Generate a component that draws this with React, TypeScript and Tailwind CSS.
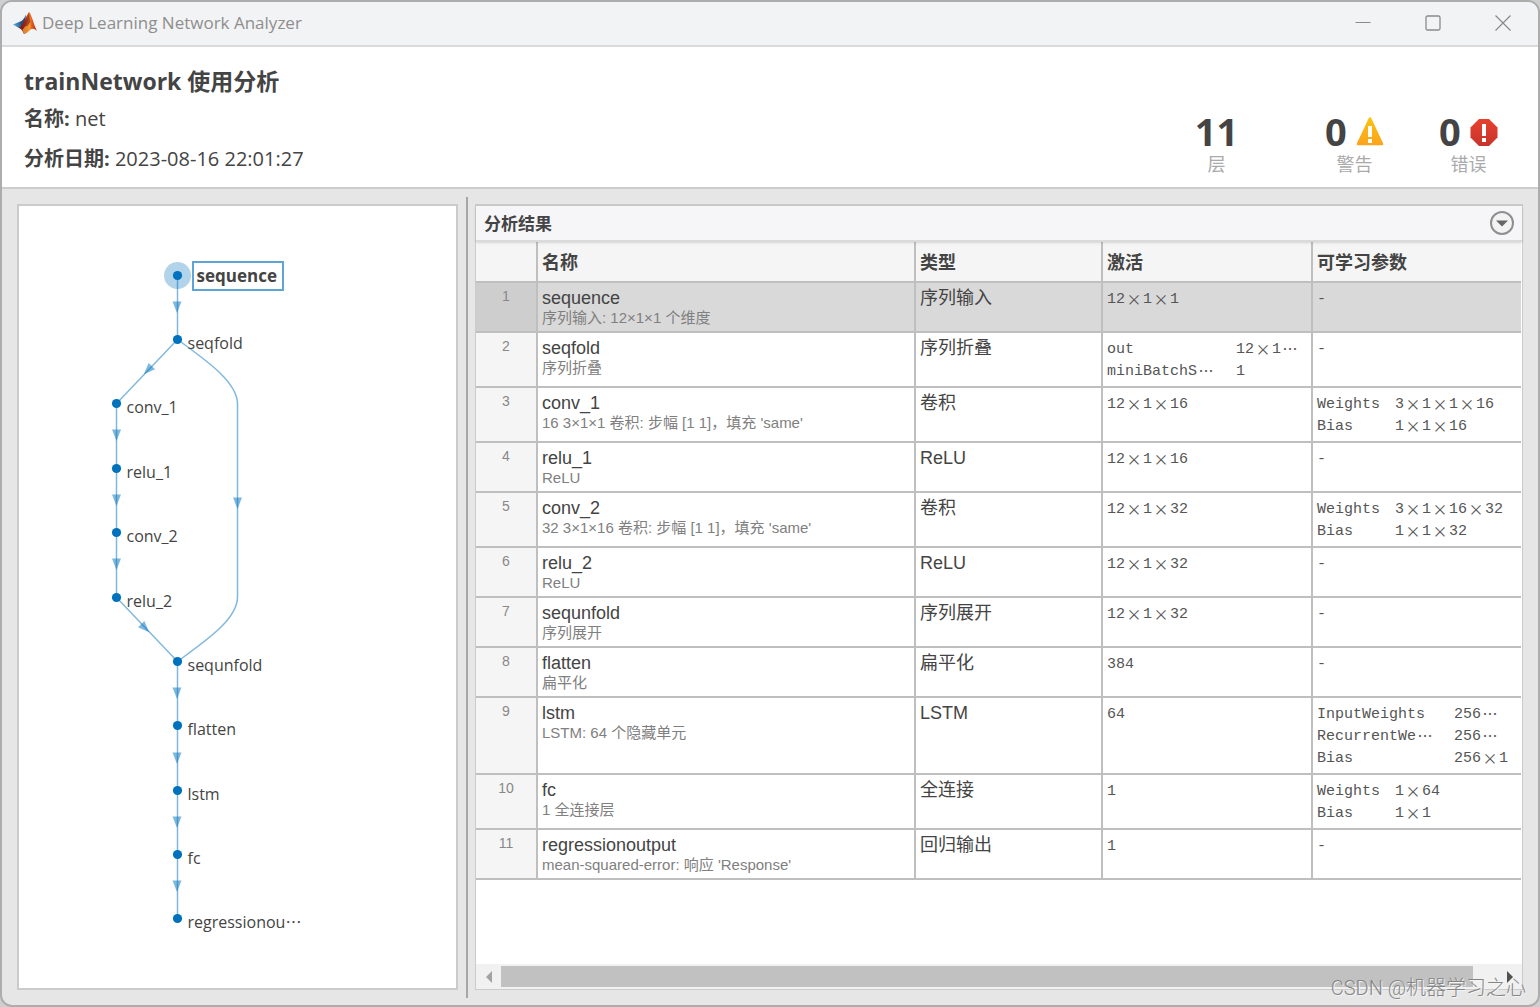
import { useState } from "react";
import clsx from "clsx";

type Param = { name: string; value: string };

type Layer = {
  name: string;
  detail: string;
  type: string;
  activations: string | Param[];
  activationWidth?: string;
  learnables?: Param[];
  learnableWidth?: string;
};

const layers: Layer[] = [
  {
    name: "sequence",
    detail: "序列输入: 12×1×1 个维度",
    type: "序列输入",
    activations: "12×1×1",
  },
  {
    name: "seqfold",
    detail: "序列折叠",
    type: "序列折叠",
    activations: [
      { name: "out", value: "12×1⋯" },
      { name: "miniBatchS⋯", value: "1" },
    ],
    activationWidth: "w-[129px]",
  },
  {
    name: "conv_1",
    detail: "16 3×1×1 卷积: 步幅 [1 1]，填充 'same'",
    type: "卷积",
    activations: "12×1×16",
    learnables: [
      { name: "Weights", value: "3×1×1×16" },
      { name: "Bias", value: "1×1×16" },
    ],
    learnableWidth: "w-[78px]",
  },
  { name: "relu_1", detail: "ReLU", type: "ReLU", activations: "12×1×16" },
  {
    name: "conv_2",
    detail: "32 3×1×16 卷积: 步幅 [1 1]，填充 'same'",
    type: "卷积",
    activations: "12×1×32",
    learnables: [
      { name: "Weights", value: "3×1×16×32" },
      { name: "Bias", value: "1×1×32" },
    ],
    learnableWidth: "w-[78px]",
  },
  { name: "relu_2", detail: "ReLU", type: "ReLU", activations: "12×1×32" },
  {
    name: "sequnfold",
    detail: "序列展开",
    type: "序列展开",
    activations: "12×1×32",
  },
  { name: "flatten", detail: "扁平化", type: "扁平化", activations: "384" },
  {
    name: "lstm",
    detail: "LSTM: 64 个隐藏单元",
    type: "LSTM",
    activations: "64",
    learnables: [
      { name: "InputWeights", value: "256⋯" },
      { name: "RecurrentWe⋯", value: "256⋯" },
      { name: "Bias", value: "256×1" },
    ],
    learnableWidth: "w-[137px]",
  },
  {
    name: "fc",
    detail: "1 全连接层",
    type: "全连接",
    activations: "1",
    learnables: [
      { name: "Weights", value: "1×64" },
      { name: "Bias", value: "1×1" },
    ],
    learnableWidth: "w-[78px]",
  },
  {
    name: "regressionoutput",
    detail: "mean-squared-error: 响应 'Response'",
    type: "回归输出",
    activations: "1",
  },
];

// node positions inside the network plot
const nodes = [
  { label: "sequence", x: 158.5, y: 69.5 },
  { label: "seqfold", x: 158.5, y: 133.5 },
  { label: "conv_1", x: 97.5, y: 197.5 },
  { label: "relu_1", x: 97.5, y: 262.5 },
  { label: "conv_2", x: 97.5, y: 326.5 },
  { label: "relu_2", x: 97.5, y: 391.5 },
  { label: "sequnfold", x: 158.5, y: 455.5 },
  { label: "flatten", x: 158.5, y: 519.5 },
  { label: "lstm", x: 158.5, y: 584.5 },
  { label: "fc", x: 158.5, y: 648.5 },
  { label: "regressionou⋯", x: 158.5, y: 712.5 },
];

const MatlabLogo = () => (
  <svg width="24" height="22" viewBox="0 0 24 22" className="shrink-0">
    <defs>
      <linearGradient id="peak" x1="0" y1="0" x2="1" y2="0">
        <stop offset="0" stopColor="#5c1414" />
        <stop offset="0.4" stopColor="#a52c1c" />
        <stop offset="0.62" stopColor="#ee7a28" />
        <stop offset="1" stopColor="#b3220f" />
      </linearGradient>
      <linearGradient id="wing" x1="0" y1="0" x2="1" y2="0">
        <stop offset="0" stopColor="#5bb0e4" />
        <stop offset="1" stopColor="#1c4a80" />
      </linearGradient>
    </defs>
    <path d="M0 12.5 L6 10 L10 13 L5.5 15.8 Z" fill="url(#wing)" />
    <path d="M6 10 C9 9.5 11 7 13 2.5 L12 10 L9 14 Z" fill="#24507f" />
    <path
      d="M16 0 C18 0.5 20.5 12 24 19 C21.5 16.5 19.5 16 17.5 17.5 C15 19.5 13.5 21.5 11 22 C10 20 8.5 16.5 5.5 15.8 C10 14 12.5 5 16 0 Z"
      fill="url(#peak)"
    />
    <path
      d="M9.5 17.5 C12 16 15 9 16.2 2 C17 8 17.5 13 17.5 17.5 C15 19.5 13.5 21.5 11 22 Z"
      fill="#f7a535"
      opacity="0.75"
    />
    <path d="M11 14.5 C13.5 10 15 5 16 1 L17.2 10 L14.5 14 Z" fill="#8f2416" opacity="0.7" />
  </svg>
);

const WarningIcon = () => (
  <svg width="28" height="30" viewBox="0 0 28 30">
    <defs>
      <linearGradient id="warn" x1="0" y1="0" x2="0" y2="1">
        <stop offset="0" stopColor="#fdc00f" />
        <stop offset="1" stopColor="#fba51c" />
      </linearGradient>
    </defs>
    <path
      d="M14 2.5 L26 28 H2 Z"
      fill="url(#warn)"
      stroke="url(#warn)"
      strokeWidth="2.6"
      strokeLinejoin="round"
    />
    <path d="M12 10h4v11h-4z M12 23h4v4h-4z" fill="#fff" />
  </svg>
);

const ErrorIcon = () => (
  <svg width="28" height="30" viewBox="0 0 28 30">
    <defs>
      <linearGradient id="err" x1="0" y1="0" x2="0" y2="1">
        <stop offset="0" stopColor="#e8402f" />
        <stop offset="1" stopColor="#c6352b" />
      </linearGradient>
    </defs>
    <path d="M9 3h10l8.5 8.5v10L19 30H9L0.5 21.5v-10z" fill="url(#err)" />
    <path d="M12 8h4v12h-4z M12 22h4v4h-4z" fill="#fff" />
  </svg>
);

const Arrow = ({ x, y, angle = 0 }: { x: number; y: number; angle?: number }) => (
  <path
    d="M-4.5 -5.5 H4.5 L0 6 Z"
    transform={`translate(${x} ${y}) rotate(${angle})`}
    fill="#0072bd"
    fillOpacity="0.5"
  />
);

const NetworkPlot = ({ selected }: { selected: number }) => (
  <svg
    width="437"
    height="760"
    viewBox="0 0 437 760"
    className="font-['Open_Sans','Noto_Sans_CJK_SC',sans-serif]"
  >
    <g fill="none" stroke="#0072bd" strokeOpacity="0.5" strokeWidth="1.5">
      <path d="M158.5 69.5 V133.5 L97.5 197.5 V391.5 L158.5 455.5 V712.5" />
      <path d="M158.5 133.5 C188 155 218.5 176 218.5 198 V391 C218.5 413 188 434 158.5 455.5" />
    </g>
    <Arrow x={158} y={101} />
    <Arrow x={129} y={164} angle={44} />
    <Arrow x={97.5} y={229} />
    <Arrow x={97.5} y={294} />
    <Arrow x={97.5} y={358} />
    <Arrow x={126} y={422} angle={-44} />
    <Arrow x={218.5} y={297} />
    <Arrow x={158} y={487} />
    <Arrow x={158} y={552} />
    <Arrow x={158} y={616} />
    <Arrow x={158} y={680} />
    {nodes.map((node, i) => (
      <g key={node.label}>
        {i === selected && (
          <>
            <circle cx={node.x} cy={node.y} r="13.5" fill="#0072bd" fillOpacity="0.3" />
            <rect
              x={node.x + 15.5}
              y={node.y - 13.5}
              width="90"
              height="28"
              fill="#fff"
              stroke="#5ea5d6"
              strokeWidth="2"
            />
          </>
        )}
        <circle cx={node.x} cy={node.y} r="4.6" fill="#0072bd" />
        <text
          x={i === selected ? node.x + 19 : node.x + 10}
          y={i === selected ? node.y + 6 : node.y + 9}
          fill="#444"
          fontSize={i === selected ? 17 : 16}
          fontWeight={i === selected ? 700 : 400}
        >
          {node.label}
        </text>
      </g>
    ))}
  </svg>
);

// the multiplication sign and the ellipsis take two character cells
const Mono = ({ text }: { text: string }) => (
  <span className="flex h-[22px] items-center">
    {text.split(/([×⋯])/).map((part, i) =>
      part === "×" || part === "⋯" ? (
        <span
          key={i}
          className="w-[18px] pb-1 text-center font-['Noto_Sans_CJK_SC',sans-serif] leading-none"
        >
          {part}
        </span>
      ) : (
        <span key={i}>{part}</span>
      )
    )}
  </span>
);

const ParamList = ({ items, width }: { items: Param[]; width?: string }) => (
  <dl>
    {items.map((item) => (
      <div key={item.name} className="flex">
        <dt className={clsx("shrink-0", width)}>
          <Mono text={item.name} />
        </dt>
        <dd>
          <Mono text={item.value} />
        </dd>
      </div>
    ))}
  </dl>
);

const cell = "border-b-2 border-[#bfbfbf] px-1 align-top";
const mono =
  "pt-1.5 pb-[3px] font-['Liberation_Mono','Noto_Sans_CJK_SC',monospace] text-[15px] leading-[22px] whitespace-nowrap text-[#555]";

const App = () => {
  const [selected, setSelected] = useState(0);

  return (
    <div className="bg-[#cfcfcf]">
      <div
        lang="zh-CN"
        className="relative flex min-h-screen flex-col overflow-hidden rounded-xl border-2 border-[#adadad] bg-[#e6e6e6] font-['Open_Sans','Noto_Sans_CJK_SC',sans-serif] text-[#444]"
      >
        <div className="flex h-[45px] items-center border-b-2 border-[#dadada] bg-[#f2f3f4] pb-0.5 pl-[11px]">
          <MatlabLogo />
          <span className="ml-[5px] flex-1 text-[17px] text-[#8e8e8e]">
            Deep Learning Network Analyzer
          </span>
          <button aria-label="Minimize" className="flex h-full w-[70px] items-center justify-center">
            <svg width="16" height="16" viewBox="0 0 16 16" stroke="#8a8a8a" fill="none">
              <path d="M0.5 7.5h15" />
            </svg>
          </button>
          <button aria-label="Maximize" className="flex h-full w-[70px] items-center justify-center">
            <svg width="16" height="16" viewBox="0 0 16 16" stroke="#8a8a8a" fill="none">
              <rect x="1" y="1" width="14" height="14" rx="1.5" strokeWidth="1.3" />
            </svg>
          </button>
          <button aria-label="Close" className="flex h-full w-[70px] items-center justify-center">
            <svg width="16" height="16" viewBox="0 0 16 16" stroke="#8a8a8a" fill="none">
              <path d="M0.5 0.5l15 15M15.5 0.5l-15 15" strokeWidth="1.2" />
            </svg>
          </button>
        </div>

        <header className="flex justify-between border-b-2 border-[#cdcdcd] bg-white pr-10 pl-[22px]">
          <div className="pt-4 pb-2">
            <h1 className="text-[23px] leading-9 font-bold">trainNetwork 使用分析</h1>
            <p className="text-xl leading-10">
              <b>名称:</b> net
            </p>
            <p className="text-xl leading-10">
              <b>分析日期:</b> 2023-08-16 22:01:27
            </p>
          </div>
          <div className="flex pt-[61px] text-center">
            <div className="w-[59px]">
              <div className="text-[38px] leading-[46px] font-bold">11</div>
              <div className="text-lg leading-5 text-[#aaa]">层</div>
            </div>
            <div className="ml-[79px] w-[59px]">
              <div className="flex items-center justify-between text-[38px] leading-[46px] font-bold">
                0 <WarningIcon />
              </div>
              <div className="text-lg leading-5 text-[#aaa]">警告</div>
            </div>
            <div className="ml-[55px] w-[59px]">
              <div className="flex items-center justify-between text-[38px] leading-[46px] font-bold">
                0 <ErrorIcon />
              </div>
              <div className="text-lg leading-5 text-[#aaa]">错误</div>
            </div>
          </div>
        </header>

        <main className="flex flex-1 px-[15px] pt-2 pb-[7px]">
          <section className="mt-[7px] mb-2 w-[441px] shrink-0 border-2 border-[#cbcbcb] bg-white">
            <NetworkPlot selected={selected} />
          </section>

          <div className="mr-[7px] ml-2 w-0.5 shrink-0 bg-[#a6a6a6]" />

          <section className="mt-[7px] mb-2 flex min-w-0 flex-1 flex-col border border-t-2 border-[#cbcbcb] bg-white">
            <div className="relative flex h-9 items-center justify-between border-b-2 border-[#dadada] bg-[#f6f6f9] px-2 shadow-sm">
              <h2 className="pt-0.5 text-[17px] font-bold">分析结果</h2>
              <button
                aria-label="选项"
                className="flex size-6 items-center justify-center rounded-full border-2 border-[#8f8f8f] bg-[#f3f3f3]"
              >
                <svg width="12" height="7" viewBox="0 0 12 7" fill="#666">
                  <path d="M0 0.5h12L6 6.5z" />
                </svg>
              </button>
            </div>

            <div className="flex-1 pr-px">
              <table className="w-full table-fixed border-separate border-spacing-0 text-left font-['Liberation_Sans','Noto_Sans_CJK_SC',sans-serif] text-lg leading-[22px]">
                <colgroup>
                  <col className="w-[62px]" />
                  <col />
                  <col className="w-[187px]" />
                  <col className="w-[210px]" />
                  <col className="w-[208px]" />
                </colgroup>
                <thead>
                  <tr className="h-[41px] bg-[#f5f5f5]">
                    <th className="border-r-2 border-b-2 border-[#bfbfbf]" />
                    <th className="border-r-2 border-b-2 border-[#bfbfbf] px-1 pt-0.5">名称</th>
                    <th className="border-r-2 border-b-2 border-[#bfbfbf] px-1 pt-0.5">类型</th>
                    <th className="border-r-2 border-b-2 border-[#bfbfbf] px-1 pt-0.5">激活</th>
                    <th className="border-b-2 border-[#bfbfbf] px-1 pt-0.5">可学习参数</th>
                  </tr>
                </thead>
                <tbody>
                  {layers.map((layer, i) => (
                    <tr
                      key={layer.name}
                      onClick={() => setSelected(i)}
                      className={i === selected ? "bg-[#d9d9d9]" : "bg-white"}
                    >
                      <td
                        className={clsx(
                          cell,
                          "border-r-2 py-1 text-center text-sm leading-[18px] text-[#888]",
                          i === selected ? "bg-[#cecece]" : "bg-[#f5f5f5]"
                        )}
                      >
                        {i + 1}
                      </td>
                      <td className={clsx(cell, "border-r-2 py-1")}>
                        <div>{layer.name}</div>
                        <div className="text-[15px] leading-[18px] text-[#808080]">
                          {layer.detail}
                        </div>
                      </td>
                      <td className={clsx(cell, "border-r-2 py-1")}>{layer.type}</td>
                      <td className={clsx(cell, mono, "border-r-2")}>
                        {typeof layer.activations === "string" ? (
                          <Mono text={layer.activations} />
                        ) : (
                          <ParamList items={layer.activations} width={layer.activationWidth} />
                        )}
                      </td>
                      <td className={clsx(cell, mono)}>
                        {layer.learnables ? (
                          <ParamList items={layer.learnables} width={layer.learnableWidth} />
                        ) : (
                          <Mono text="-" />
                        )}
                      </td>
                    </tr>
                  ))}
                </tbody>
              </table>
            </div>

            <div className="flex h-[25px] items-center bg-[#f1f1f1]">
              <button aria-label="向左滚动" className="flex w-[25px] items-center justify-center">
                <svg width="6" height="12" viewBox="0 0 6 12" fill="#a3a3a3">
                  <path d="M6 0v12L0 6z" />
                </svg>
              </button>
              <div className="mr-6 h-[21px] flex-1 bg-[#c1c1c1]" />
              <button aria-label="向右滚动" className="flex w-[25px] items-center justify-center">
                <svg width="6" height="12" viewBox="0 0 6 12" fill="#505050">
                  <path d="M0 0v12l6-6z" />
                </svg>
              </button>
            </div>
          </section>
        </main>

        <div className="pointer-events-none absolute right-3 bottom-[3px] font-['Roboto','Noto_Sans_CJK_SC',sans-serif] text-xl leading-7 font-light text-[#858585] [text-shadow:1px_1px_0_#f4f4f4]">
          CSDN @机器学习之心
        </div>
      </div>
    </div>
  );
};

export default App;
